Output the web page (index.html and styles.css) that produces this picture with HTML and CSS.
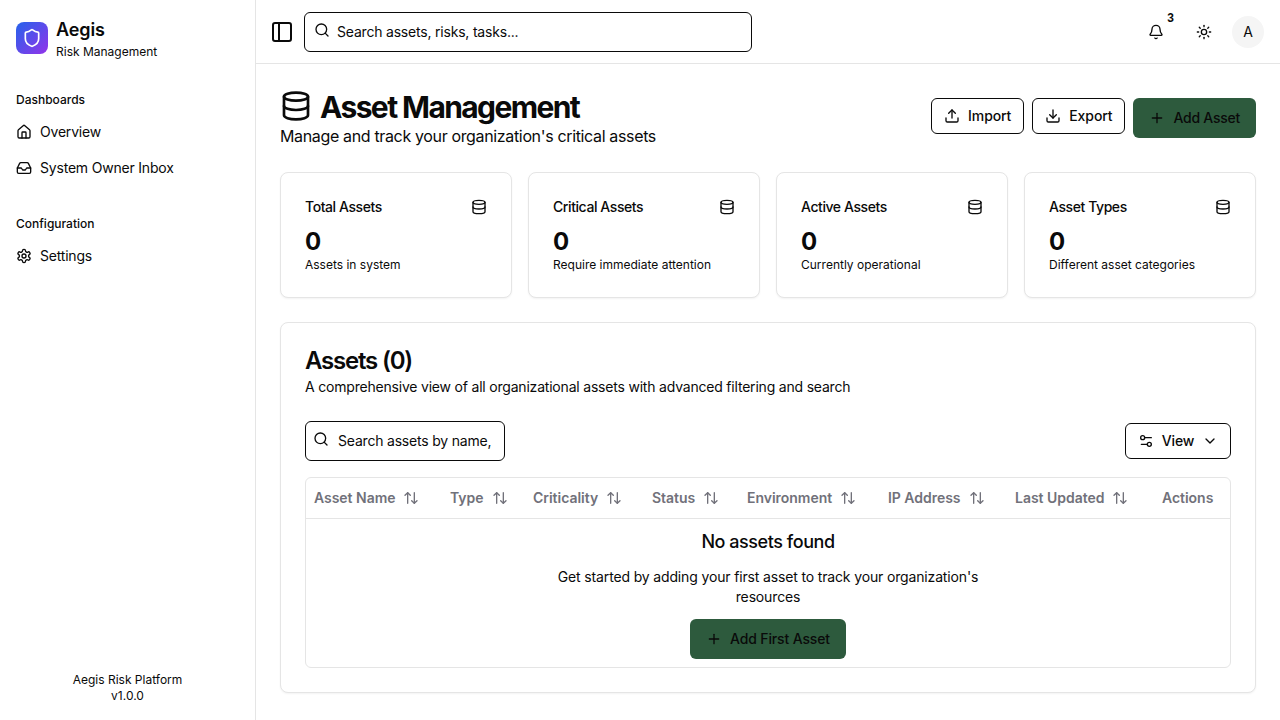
FILE: index.html
```html
<!DOCTYPE html>
<html lang="en">
<head>
    <meta charset="UTF-8">
    <meta name="viewport" content="width=device-width, initial-scale=1.0">
    <title>Aegis - Asset Management</title>
    <link rel="stylesheet" href="styles.css">
</head>
<body>
    <svg class="sprite" xmlns="http://www.w3.org/2000/svg">
        <symbol id="i-shield" viewBox="0 0 24 24"><path d="M20 13c0 5-3.5 7.5-7.66 8.95a1 1 0 0 1-.67-.01C7.5 20.5 4 18 4 13V6a1 1 0 0 1 1-1c2 0 4.5-1.2 6.24-2.72a1.17 1.17 0 0 1 1.52 0C14.51 3.81 17 5 19 5a1 1 0 0 1 1 1z"/></symbol>
        <symbol id="i-home" viewBox="0 0 24 24"><path d="M15 21v-8a1 1 0 0 0-1-1h-4a1 1 0 0 0-1 1v8"/><path d="M3 10a2 2 0 0 1 .709-1.528l7-5.999a2 2 0 0 1 2.582 0l7 5.999A2 2 0 0 1 21 10v9a2 2 0 0 1-2 2H5a2 2 0 0 1-2-2z"/></symbol>
        <symbol id="i-inbox" viewBox="0 0 24 24"><polyline points="22 12 16 12 14 15 10 15 8 12 2 12"/><path d="M5.45 5.11 2 12v6a2 2 0 0 0 2 2h16a2 2 0 0 0 2-2v-6l-3.45-6.89A2 2 0 0 0 16.76 4H7.24a2 2 0 0 0-1.79 1.11z"/></symbol>
        <symbol id="i-settings" viewBox="0 0 24 24"><path d="M12.22 2h-.44a2 2 0 0 0-2 2v.18a2 2 0 0 1-1 1.73l-.43.25a2 2 0 0 1-2 0l-.15-.08a2 2 0 0 0-2.73.73l-.22.38a2 2 0 0 0 .73 2.73l.15.1a2 2 0 0 1 1 1.72v.51a2 2 0 0 1-1 1.74l-.15.09a2 2 0 0 0-.73 2.73l.22.38a2 2 0 0 0 2.73.73l.15-.08a2 2 0 0 1 2 0l.43.25a2 2 0 0 1 1 1.73V20a2 2 0 0 0 2 2h.44a2 2 0 0 0 2-2v-.18a2 2 0 0 1 1-1.73l.43-.25a2 2 0 0 1 2 0l.15.08a2 2 0 0 0 2.73-.73l.22-.39a2 2 0 0 0-.73-2.73l-.15-.08a2 2 0 0 1-1-1.74v-.5a2 2 0 0 1 1-1.74l.15-.09a2 2 0 0 0 .73-2.73l-.22-.38a2 2 0 0 0-2.73-.73l-.15.08a2 2 0 0 1-2 0l-.43-.25a2 2 0 0 1-1-1.73V4a2 2 0 0 0-2-2z"/><circle cx="12" cy="12" r="3"/></symbol>
        <symbol id="i-panel" viewBox="0 0 24 24"><rect x="3" y="3" width="18" height="18" rx="2"/><path d="M9 3v18"/></symbol>
        <symbol id="i-search" viewBox="0 0 24 24"><circle cx="11" cy="11" r="8"/><path d="m21 21-4.3-4.3"/></symbol>
        <symbol id="i-bell" viewBox="0 0 24 24"><path d="M10.268 21a2 2 0 0 0 3.464 0"/><path d="M3.262 15.326A1 1 0 0 0 4 17h16a1 1 0 0 0 .74-1.673C19.41 13.956 18 12.499 18 8A6 6 0 0 0 6 8c0 4.499-1.411 5.956-2.738 7.326"/></symbol>
        <symbol id="i-sun" viewBox="0 0 24 24"><circle cx="12" cy="12" r="4"/><path d="M12 2v2"/><path d="M12 20v2"/><path d="m4.93 4.93 1.41 1.41"/><path d="m17.66 17.66 1.41 1.41"/><path d="M2 12h2"/><path d="M20 12h2"/><path d="m6.34 17.66-1.41 1.41"/><path d="m19.07 4.93-1.41 1.41"/></symbol>
        <symbol id="i-database" viewBox="0 0 24 24"><ellipse cx="12" cy="5" rx="9" ry="3"/><path d="M3 5V19A9 3 0 0 0 21 19V5"/><path d="M3 12A9 3 0 0 0 21 12"/></symbol>
        <symbol id="i-upload" viewBox="0 0 24 24"><path d="M21 15v4a2 2 0 0 1-2 2H5a2 2 0 0 1-2-2v-4"/><polyline points="17 8 12 3 7 8"/><line x1="12" y1="3" x2="12" y2="15"/></symbol>
        <symbol id="i-download" viewBox="0 0 24 24"><path d="M21 15v4a2 2 0 0 1-2 2H5a2 2 0 0 1-2-2v-4"/><polyline points="7 10 12 15 17 10"/><line x1="12" y1="15" x2="12" y2="3"/></symbol>
        <symbol id="i-plus" viewBox="0 0 24 24"><path d="M5 12h14"/><path d="M12 5v14"/></symbol>
        <symbol id="i-sliders" viewBox="0 0 24 24"><path d="M20 7h-9"/><path d="M14 17H5"/><circle cx="17" cy="17" r="3"/><circle cx="7" cy="7" r="3"/></symbol>
        <symbol id="i-chevron" viewBox="0 0 24 24"><path d="m6 9 6 6 6-6"/></symbol>
        <symbol id="i-sort" viewBox="0 0 24 24"><path d="m21 16-4 4-4-4"/><path d="M17 20V4"/><path d="m3 8 4-4 4 4"/><path d="M7 4v16"/></symbol>
    </svg>

    <div class="app">
        <aside class="sidebar">
            <div class="brand">
                <div class="brand-logo"><svg class="icon icon-20"><use href="#i-shield"/></svg></div>
                <div>
                    <div class="brand-name">Aegis</div>
                    <div class="brand-sub">Risk Management</div>
                </div>
            </div>

            <nav class="nav-group">
                <div class="nav-label">Dashboards</div>
                <a class="nav-item"><svg class="icon icon-16"><use href="#i-home"/></svg>Overview</a>
                <a class="nav-item"><svg class="icon icon-16"><use href="#i-inbox"/></svg>System Owner Inbox</a>
            </nav>

            <nav class="nav-group">
                <div class="nav-label">Configuration</div>
                <a class="nav-item"><svg class="icon icon-16"><use href="#i-settings"/></svg>Settings</a>
            </nav>

            <div class="sidebar-footer">
                <div>Aegis Risk Platform</div>
                <div>v1.0.0</div>
            </div>
        </aside>

        <div class="main">
            <header class="topbar">
                <button class="icon-btn panel-btn"><svg class="icon icon-24"><use href="#i-panel"/></svg></button>
                <div class="search top-search">
                    <svg class="icon icon-16"><use href="#i-search"/></svg>
                    <input type="text" placeholder="Search assets, risks, tasks...">
                </div>
                <div class="topbar-right">
                    <button class="icon-btn bell-btn">
                        <svg class="icon icon-16"><use href="#i-bell"/></svg>
                        <span class="badge">3</span>
                    </button>
                    <button class="icon-btn"><svg class="icon icon-16"><use href="#i-sun"/></svg></button>
                    <div class="avatar">A</div>
                </div>
            </header>

            <main class="content">
                <div class="page-head">
                    <div>
                        <h1><svg class="icon icon-32"><use href="#i-database"/></svg><span>Asset Management</span></h1>
                        <p class="page-sub">Manage and track your organization's critical assets</p>
                    </div>
                    <div class="page-actions">
                        <button class="btn btn-outline"><svg class="icon icon-16"><use href="#i-upload"/></svg>Import</button>
                        <button class="btn btn-outline"><svg class="icon icon-16"><use href="#i-download"/></svg>Export</button>
                        <button class="btn btn-green"><svg class="icon icon-16"><use href="#i-plus"/></svg>Add Asset</button>
                    </div>
                </div>

                <div class="stats">
                    <div class="card stat">
                        <div class="stat-top"><span>Total Assets</span><svg class="icon icon-16"><use href="#i-database"/></svg></div>
                        <div class="stat-num">0</div>
                        <div class="stat-note">Assets in system</div>
                    </div>
                    <div class="card stat">
                        <div class="stat-top"><span>Critical Assets</span><svg class="icon icon-16"><use href="#i-database"/></svg></div>
                        <div class="stat-num">0</div>
                        <div class="stat-note">Require immediate attention</div>
                    </div>
                    <div class="card stat">
                        <div class="stat-top"><span>Active Assets</span><svg class="icon icon-16"><use href="#i-database"/></svg></div>
                        <div class="stat-num">0</div>
                        <div class="stat-note">Currently operational</div>
                    </div>
                    <div class="card stat">
                        <div class="stat-top"><span>Asset Types</span><svg class="icon icon-16"><use href="#i-database"/></svg></div>
                        <div class="stat-num">0</div>
                        <div class="stat-note">Different asset categories</div>
                    </div>
                </div>

                <section class="card assets">
                    <h2>Assets (0)</h2>
                    <p class="assets-sub">A comprehensive view of all organizational assets with advanced filtering and search</p>

                    <div class="toolbar">
                        <div class="search table-search">
                            <svg class="icon icon-16"><use href="#i-search"/></svg>
                            <input type="text" placeholder="Search assets by name, type or owner...">
                        </div>
                        <button class="btn btn-outline btn-view">
                            <svg class="icon icon-16"><use href="#i-sliders"/></svg>View<svg class="icon icon-16"><use href="#i-chevron"/></svg>
                        </button>
                    </div>

                    <div class="table-wrap">
                        <table>
                            <colgroup>
                                <col class="col-name"><col class="col-type"><col class="col-crit"><col class="col-status">
                                <col class="col-env"><col class="col-ip"><col class="col-updated"><col class="col-actions">
                            </colgroup>
                            <thead>
                                <tr>
                                    <th><span>Asset Name</span><svg class="icon icon-16"><use href="#i-sort"/></svg></th>
                                    <th><span>Type</span><svg class="icon icon-16"><use href="#i-sort"/></svg></th>
                                    <th><span>Criticality</span><svg class="icon icon-16"><use href="#i-sort"/></svg></th>
                                    <th><span>Status</span><svg class="icon icon-16"><use href="#i-sort"/></svg></th>
                                    <th><span>Environment</span><svg class="icon icon-16"><use href="#i-sort"/></svg></th>
                                    <th><span>IP Address</span><svg class="icon icon-16"><use href="#i-sort"/></svg></th>
                                    <th><span>Last Updated</span><svg class="icon icon-16"><use href="#i-sort"/></svg></th>
                                    <th><span>Actions</span></th>
                                </tr>
                            </thead>
                            <tbody>
                                <tr>
                                    <td colspan="8" class="empty">
                                        <h3>No assets found</h3>
                                        <p>Get started by adding your first asset to track your organization's resources</p>
                                        <button class="btn btn-green btn-first"><svg class="icon icon-16"><use href="#i-plus"/></svg>Add First Asset</button>
                                    </td>
                                </tr>
                            </tbody>
                        </table>
                    </div>
                </section>
            </main>
        </div>
    </div>
</body>
</html>
```

FILE: styles.css
```css
* {
    box-sizing: border-box;
}

body {
    margin: 0;
    font-family: 'Inter', 'Liberation Sans', sans-serif;
    background-color: #fff;
    color: #0a0a0a;
    font-size: 14px;
    line-height: 20px;
    letter-spacing: -0.2px;
}

.sprite {
    display: none;
}

.icon {
    fill: none;
    stroke: currentColor;
    stroke-width: 2;
    stroke-linecap: round;
    stroke-linejoin: round;
    flex-shrink: 0;
}

.icon-16 { width: 16px; height: 16px; }
.icon-20 { width: 20px; height: 20px; }
.icon-24 { width: 24px; height: 24px; }
.icon-32 { width: 32px; height: 32px; }

.app {
    display: flex;
    height: 720px;
    overflow: hidden;
}

/* sidebar */
.sidebar {
    width: 256px;
    flex-shrink: 0;
    display: flex;
    flex-direction: column;
    border-right: 1px solid #e5e5e5;
    padding: 16px 0;
}

.brand {
    display: flex;
    align-items: center;
    gap: 8px;
    padding: 0 16px;
    margin-bottom: 28px;
}

.brand-logo {
    width: 32px;
    height: 32px;
    border-radius: 8px;
    display: flex;
    align-items: center;
    justify-content: center;
    color: #fff;
    background: linear-gradient(135deg, #2563eb, #9333ea);
}

.brand-name {
    font-size: 18px;
    line-height: 28px;
    font-weight: 600;
    letter-spacing: -0.1px;
}

.brand-sub {
    font-size: 12px;
    line-height: 16px;
    letter-spacing: 0;
}

.nav-group {
    padding: 0 16px;
    margin-bottom: 26px;
}

.nav-label {
    font-size: 12px;
    font-weight: 500;
    line-height: 16px;
    margin-bottom: 6px;
    padding-top: 4px;
    letter-spacing: 0;
}

.nav-item {
    display: flex;
    align-items: center;
    gap: 8px;
    height: 36px;
}

.sidebar-footer {
    margin-top: auto;
    text-align: center;
    font-size: 12px;
    line-height: 16px;
    letter-spacing: 0;
}

/* top bar */
.main {
    flex: 1;
    min-width: 0;
    display: flex;
    flex-direction: column;
}

.topbar {
    height: 64px;
    flex-shrink: 0;
    display: flex;
    align-items: center;
    padding: 0 16px;
    border-bottom: 1px solid #e5e5e5;
}

.icon-btn {
    width: 32px;
    height: 32px;
    padding: 0;
    border: none;
    background: none;
    color: inherit;
    display: flex;
    align-items: center;
    justify-content: center;
    position: relative;
}

.panel-btn {
    width: 20px;
    margin-right: 12px;
}

.search {
    display: flex;
    align-items: center;
    height: 40px;
    border: 1px solid #0a0a0a;
    border-radius: 6px;
    background: #fff;
}

.search .icon {
    margin-bottom: 4px;
}

.search input {
    flex: 1;
    min-width: 0;
    border: none;
    outline: none;
    padding: 0;
    background: none;
    font: inherit;
    letter-spacing: inherit;
    color: #0a0a0a;
}

.search input::placeholder {
    color: #0a0a0a;
    opacity: 1;
}

.top-search {
    width: 448px;
    padding: 0 10px 0 9px;
    gap: 7px;
}

.table-search {
    width: 200px;
    padding: 0 13px 0 7px;
    gap: 9px;
}

.topbar-right {
    margin-left: auto;
    display: flex;
    align-items: center;
    gap: 12px;
}

.bell-btn {
    margin-right: 4px;
}

.badge {
    position: absolute;
    top: -6px;
    right: -2px;
    font-size: 12px;
    line-height: 16px;
    font-weight: 600;
}

.avatar {
    width: 32px;
    height: 32px;
    border-radius: 50%;
    background: #f5f5f5;
    display: flex;
    align-items: center;
    justify-content: center;
    font-size: 14px;
}

/* page */
.content {
    padding: 24px;
}

.page-head {
    display: flex;
    justify-content: space-between;
    align-items: center;
    margin-bottom: 24px;
}

h1 {
    display: flex;
    align-items: center;
    gap: 8px;
    height: 36px;
    margin: 0;
    font-size: 30px;
    line-height: 36px;
    font-weight: 700;
    letter-spacing: -1.6px;
}

h1 span {
    padding-top: 2px;
}

.page-sub {
    margin: 0;
    font-size: 16px;
    line-height: 24px;
    letter-spacing: -0.35px;
}

.page-actions {
    display: flex;
    align-items: flex-start;
    gap: 8px;
}

.btn {
    display: inline-flex;
    align-items: center;
    justify-content: center;
    gap: 8px;
    font: inherit;
    font-weight: 500;
    letter-spacing: -0.1px;
    color: #0a0a0a;
    border-radius: 6px;
}

.btn-outline {
    height: 36px;
    padding: 0 12px;
    background: #fff;
    border: 1px solid #0a0a0a;
}

.btn-green {
    height: 40px;
    padding: 0 16px;
    background: #2d5a3d;
    border: none;
    letter-spacing: -0.25px;
}

.btn-first {
    letter-spacing: -0.15px;
}

/* stat cards */
.card {
    background: #fff;
    border: 1px solid #e5e5e5;
    border-radius: 8px;
    box-shadow: 0 1px 2px rgba(0, 0, 0, 0.05);
}

.stats {
    display: grid;
    grid-template-columns: repeat(4, 1fr);
    gap: 16px;
    margin-bottom: 24px;
}

.stat {
    height: 126px;
    padding: 24px;
}

.stat-top {
    display: flex;
    justify-content: space-between;
    align-items: center;
    font-weight: 500;
    letter-spacing: -0.42px;
    margin-bottom: 9px;
}

.stat-num {
    font-size: 24px;
    line-height: 31px;
    font-weight: 700;
    letter-spacing: 0;
}

.stat-note {
    font-size: 12px;
    line-height: 16px;
    letter-spacing: 0;
}

/* assets table */
.assets {
    padding: 24px;
    height: 371px;
}

h2 {
    margin: 0;
    font-size: 24px;
    line-height: 28px;
    font-weight: 600;
    letter-spacing: -1.2px;
}

.assets-sub {
    margin: 2px 0 0;
}

.toolbar {
    display: flex;
    justify-content: space-between;
    align-items: center;
    margin-top: 24px;
    margin-bottom: 16px;
}

.btn-view {
    width: 106px;
    gap: 8px;
}

.table-wrap {
    border: 1px solid #e5e5e5;
    border-radius: 6px;
}

table {
    width: 100%;
    table-layout: fixed;
    border-collapse: collapse;
}

.col-name { width: 136px; }
.col-type { width: 83px; }
.col-crit { width: 119px; }
.col-status { width: 95px; }
.col-env { width: 141px; }
.col-ip { width: 127px; }
.col-updated { width: 147px; }
.col-actions { width: 76px; }

th {
    height: 40px;
    padding: 0 8px;
    text-align: left;
    font-weight: 600;
    letter-spacing: -0.03px;
    color: #71717a;
    white-space: nowrap;
    border-bottom: 1px solid #e5e5e5;
}

th span {
    vertical-align: middle;
}

th .icon {
    margin-left: 8px;
    vertical-align: middle;
}

.empty {
    padding: 9px 8px 8px;
    text-align: center;
    height: 149px;
}

.empty h3 {
    margin: 0 0 11px;
    font-size: 18px;
    line-height: 28px;
    font-weight: 500;
    letter-spacing: -0.45px;
}

.empty p {
    width: 448px;
    margin: 0 auto 12px;
    letter-spacing: -0.15px;
}
```
